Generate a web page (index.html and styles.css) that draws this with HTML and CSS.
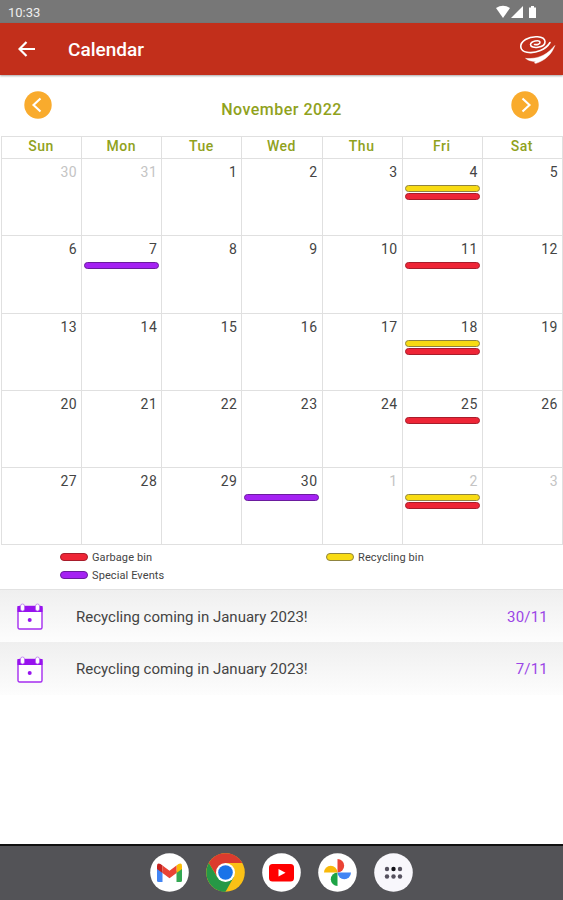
FILE: index.html
```html
<!DOCTYPE html>
<html lang="en">
<head>
  <meta charset="UTF-8" />
  <title>Calendar</title>
  <link rel="stylesheet" href="styles.css">
</head>
<body>
  <div class="status">
    <span>10:33</span>
    <svg width="42" height="14" viewBox="0 0 42 14" fill="#fff">
      <path d="M0 3 Q7 -1.5 14 3 L7 13Z" />
      <path d="M27 1v12H15z" />
      <path d="M33 2.500h2V1h3v1.500h2V13h-7z" />
    </svg>
  </div>

  <header class="header">
    <svg class="back" width="18" height="16" viewBox="0 0 18 16">
      <path d="M17 8H2M8.500 1 1.500 8l7 7" fill="none" stroke="#fff" stroke-width="2.200" />
    </svg>
    <h1>Calendar</h1>
    <svg class="logo" width="37" height="29" viewBox="0 0 37 29" fill="none" stroke="#fff" stroke-linecap="round">
      <path d="M15.500 9.500C18 10 21.500 9 21 7C20 4.500 12 6 11.500 9.500C11.500 14.500 26.500 13 26 6.500C25.500 .5 13 .5 6.500 4.500C-.5 9 .5 16 8 17.300C17 18.800 27 14.500 31 7.500" stroke-width="1.600" />
      <path d="M7 23.500C20 24.500 29 19 35.800 10.500C33 19 26 25.500 17 28.300C15 28.300 15 27.500 17 26.500C13 26.500 8.500 25.500 7 23.500Z" fill="#fff" stroke-width=".5" />
    </svg>
  </header>

  <div class="month">
    <svg width="28" height="28" viewBox="0 0 28 28">
      <circle cx="14" cy="14" r="13.700" fill="#f9ab2d" />
      <path d="m16.500 7.500-7 6.500 7 6.500" fill="none" stroke="#fff" stroke-width="2.100" />
    </svg>
    <h2>November 2022</h2>
    <svg width="28" height="28" viewBox="0 0 28 28">
      <circle cx="14" cy="14" r="13.700" fill="#f9ab2d" />
      <path d="m11.500 7.500 7 6.500-7 6.500" fill="none" stroke="#fff" stroke-width="2.100" />
    </svg>
  </div>

  <table class="calendar">
    <thead>
      <tr><th>Sun</th><th>Mon</th><th>Tue</th><th>Wed</th><th>Thu</th><th>Fri</th><th>Sat</th></tr>
    </thead>
    <tbody>
      <tr>
        <td class="other">30</td><td class="other">31</td><td>1</td><td>2</td><td>3</td>
        <td>4<div class="bar recycling"></div><div class="bar garbage"></div></td>
        <td>5</td>
      </tr>
      <tr>
        <td>6</td>
        <td>7<div class="bar special"></div></td>
        <td>8</td><td>9</td><td>10</td>
        <td>11<div class="bar garbage"></div></td>
        <td>12</td>
      </tr>
      <tr>
        <td>13</td><td>14</td><td>15</td><td>16</td><td>17</td>
        <td>18<div class="bar recycling"></div><div class="bar garbage"></div></td>
        <td>19</td>
      </tr>
      <tr>
        <td>20</td><td>21</td><td>22</td><td>23</td><td>24</td>
        <td>25<div class="bar garbage"></div></td>
        <td>26</td>
      </tr>
      <tr>
        <td>27</td><td>28</td><td>29</td>
        <td>30<div class="bar special"></div></td>
        <td class="other">1</td>
        <td class="other">2<div class="bar recycling"></div><div class="bar garbage"></div></td>
        <td class="other">3</td>
      </tr>
    </tbody>
  </table>

  <div class="legend">
    <div><span class="bar garbage"></span>Garbage bin</div>
    <div><span class="bar recycling"></span>Recycling bin</div>
    <div><span class="bar special"></span>Special Events</div>
  </div>

  <div class="events">
    <div class="event">
      <svg width="26" height="27" viewBox="0 0 26 27">
        <rect x="1" y="3.500" width="24" height="22.500" rx="1.500" fill="#fff" stroke="#a52df0" stroke-width="1.400" />
        <path d="M.5 3h25v6H.5z" fill="#9713ee" />
        <rect x="3.500" y="1" width="4" height="7" rx="2" fill="#fff" stroke="#b366f0" stroke-width=".7" />
        <rect x="18.500" y="1" width="4" height="7" rx="2" fill="#fff" stroke="#b366f0" stroke-width=".7" />
        <circle cx="12.700" cy="17" r="2" fill="#9713ee" />
      </svg>
      <span class="title">Recycling coming in January 2023!</span>
      <span class="date">30/11</span>
    </div>
    <div class="event">
      <svg width="26" height="27" viewBox="0 0 26 27">
        <rect x="1" y="3.500" width="24" height="22.500" rx="1.500" fill="#fff" stroke="#a52df0" stroke-width="1.400" />
        <path d="M.5 3h25v6H.5z" fill="#9713ee" />
        <rect x="3.500" y="1" width="4" height="7" rx="2" fill="#fff" stroke="#b366f0" stroke-width=".7" />
        <rect x="18.500" y="1" width="4" height="7" rx="2" fill="#fff" stroke="#b366f0" stroke-width=".7" />
        <circle cx="12.700" cy="17" r="2" fill="#9713ee" />
      </svg>
      <span class="title">Recycling coming in January 2023!</span>
      <span class="date">7/11</span>
    </div>
  </div>

  <nav class="dock">
    <!-- Gmail -->
    <svg width="39" height="39" viewBox="0 0 39 39">
      <circle cx="19.500" cy="19.500" r="19.300" fill="#fff" />
      <path d="M7 14l5.500 4v11H8.500Q7 29 7 27.500z" fill="#4285f4" />
      <path d="M32 14l-5.500 4v11h4q1.500 0 1.500-1.500z" fill="#34a853" />
      <path d="M26.500 12.500l2-1.500Q32 9.500 32 13v3l-5.500 4z" fill="#fbbc04" />
      <path d="M7 16v-3q0-3.500 3.500-2l2 1.500V20z" fill="#c5221f" />
      <path d="M12.500 12.500l7 5.300 7-5.300V20l-7 5.200-7-5.200z" fill="#ea4335" />
    </svg>
    <!-- Chrome -->
    <svg width="39" height="39" viewBox="0 0 39 39">
      <circle cx="19.500" cy="19.500" r="19.300" fill="#fbc116" />
      <path d="M19.500 19.500V10h16.800A19.300 19.300 0 0 0 2.800 10l8.500 14z" fill="#db3b2e" />
      <path d="M2.800 10A19.300 19.300 0 0 0 19.500 38.800L27.700 24.200 19.500 19.500 11.300 24.200z" fill="#269846" />
      <circle cx="19.500" cy="19.500" r="9.500" fill="#fff" />
      <circle cx="19.500" cy="19.500" r="7.300" fill="#1a73e8" />
    </svg>
    <!-- YouTube -->
    <svg width="39" height="39" viewBox="0 0 39 39">
      <circle cx="19.500" cy="19.500" r="19.300" fill="#fff" />
      <rect x="7" y="11" width="25" height="17.500" rx="3.500" fill="#f00" />
      <path d="M16.500 16l7 3.700-7 3.800z" fill="#fff" />
    </svg>
    <!-- Photos -->
    <svg width="39" height="39" viewBox="0 0 39 39">
      <circle cx="19.500" cy="19.500" r="19.300" fill="#fff" />
      <path d="M19.500 6a6.700 6.700 0 0 1 0 13.400z" fill="#ea4335" />
      <path d="M33 19.500a6.700 6.700 0 0 1-13.400 0z" fill="#4285f4" />
      <path d="M19.500 33a6.700 6.700 0 0 1 0-13.400z" fill="#1ea446" />
      <path d="M6 19.500a6.700 6.700 0 0 1 13.400 0z" fill="#f9b90a" />
    </svg>
    <!-- All apps -->
    <svg width="39" height="39" viewBox="0 0 39 39" fill="#55515f">
      <circle cx="19.500" cy="19.500" r="19.300" fill="#f8f7fc" />
      <circle cx="13" cy="16" r="2.200" />
      <circle cx="19.500" cy="16" r="2.200" fill="#111118" />
      <circle cx="26" cy="16" r="2.200" />
      <circle cx="13" cy="23.500" r="2.200" />
      <circle cx="19.500" cy="23.500" r="2.200" />
      <circle cx="26" cy="23.500" r="2.200" />
    </svg>
  </nav>
</body>
</html>
```
FILE: styles.css
```css
* {
  box-sizing: border-box;
}
body {
  margin: 0;
  height: 900px;
  display: flex;
  flex-direction: column;
  background: #fff;
  font-family: Roboto, "Liberation Sans", sans-serif;
  color: #444;
  overflow: hidden;
}
svg {
  display: block;
  flex: none;
}
.status {
  height: 23px;
  padding: 1px 25px 0 8px;
  display: flex;
  align-items: center;
  justify-content: space-between;
  background: #777;
  color: #eee;
  font-size: 13px;
}
.header {
  height: 52px;
  padding: 0 7px 0 18px;
  display: flex;
  align-items: center;
  background: #c22f1b;
  box-shadow: 0 1px 2px rgba(0, 0, 0, 0.35);
}
.header h1 {
  flex: 1;
  margin: 1px 0 0 32px;
  color: #fff;
  font-size: 19px;
  font-weight: 500;
}
.month {
  height: 61px;
  padding: 16px 24px 0;
  display: flex;
  align-items: flex-start;
  justify-content: space-between;
}
.month h2 {
  margin: 9px 0 0;
  color: #90a21c;
  font-size: 16px;
  line-height: 20px;
  font-weight: 500;
  letter-spacing: 0.5px;
}
.calendar {
  width: 562px;
  height: 409px;
  margin-left: 1px;
  table-layout: fixed;
  border-collapse: collapse;
}
th, td {
  border: 1px solid #e0e0e0;
}
th {
  height: 22px;
  padding: 0 1px 2px 0;
  color: #90a21c;
  font-size: 14px;
  line-height: 19px;
  font-weight: 500;
  letter-spacing: 0.5px;
}
td {
  height: 77.3px;
  padding: 5px 4px 0 2px;
  vertical-align: top;
  text-align: right;
  font-size: 14px;
  line-height: 17px;
  letter-spacing: 0.5px;
}
.other {
  color: #c4c4c4;
}
.bar {
  height: 7px;
  border: 1px solid;
  border-radius: 4px;
}
td .bar {
  width: 75px;
  margin-bottom: 1px;
}
td .bar:first-child {
  margin-top: 4px;
}
.garbage {
  background: #ee2536;
  border-color: #a71d2b;
}
.recycling {
  background: #f8db13;
  border-color: #8f8440;
}
.special {
  background: #a522f3;
  border-color: #6b1c9e;
}
.legend {
  height: 44px;
  padding: 3px 0 0 60px;
  display: grid;
  grid-template-columns: 266px 1fr;
  grid-auto-rows: 18px;
  font-size: 11px;
  letter-spacing: 0.1px;
}
.legend div {
  display: flex;
  align-items: center;
}
.legend .bar {
  width: 28px;
  height: 8px;
  margin-right: 4px;
}
.events {
  flex: 1;
}
.event {
  height: 53px;
  padding: 1px 15px 0 17px;
  display: flex;
  align-items: center;
  background: linear-gradient(#efefef, #fdfdfd);
  font-size: 15px;
}
.event:first-child {
  border-top: 1px solid #e2e2e2;
}
.title {
  flex: 1;
  margin-left: 33px;
}
.date {
  color: #9b45e6;
  letter-spacing: 0.2px;
}
.dock {
  height: 56px;
  padding-bottom: 2px;
  display: flex;
  align-items: center;
  justify-content: center;
  gap: 17px;
  background: #535357;
  border-top: 2px solid #111;
}
```
